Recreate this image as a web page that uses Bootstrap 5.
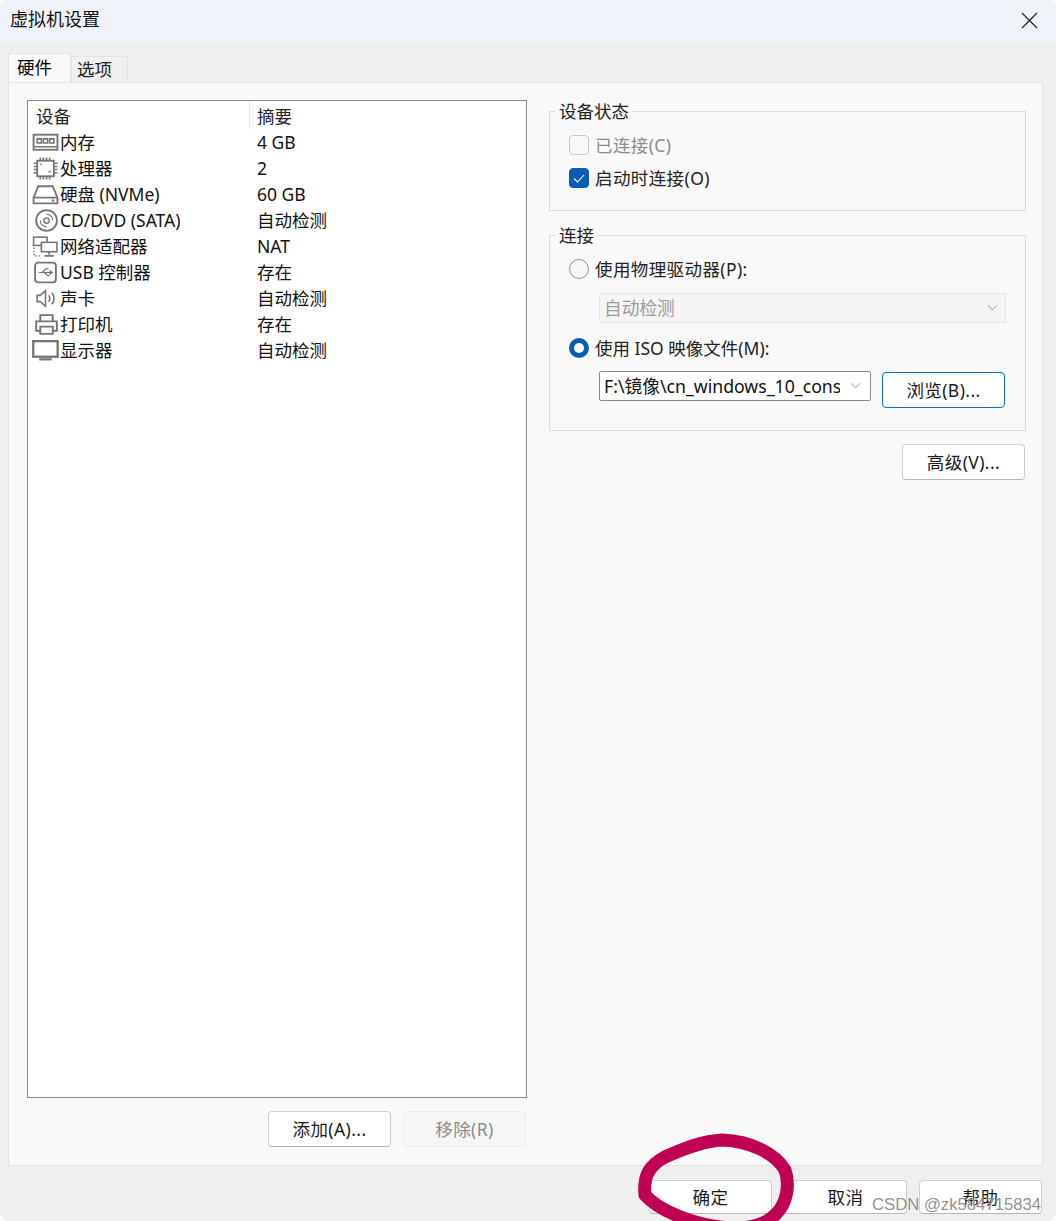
<!DOCTYPE html>
<html lang="zh-CN">
<head>
<meta charset="utf-8">
<title>虚拟机设置</title>
<link rel="stylesheet" href="https://cdn.jsdelivr.net/npm/bootstrap@5.3.0/dist/css/bootstrap.min.css">
<style>
html,body{height:100%;margin:0;background:#fff;overflow:hidden}
body{font-family:"Noto Sans","Noto Sans CJK SC",sans-serif;font-size:17.5px;line-height:26px;color:#111}
.vm-window{height:1221px;background:#efefef;border-radius:8px;position:relative;overflow:hidden}
.vm-title{height:42px;background:#f0f3f9;padding:6px 10px 0 10px;font-size:18px}
.vm-close{width:17px;height:17px;margin:6px 8px 0 0;display:block}
.vm-tabs{height:40px;padding:12px 0 0 8px;border:0;align-items:flex-end;flex-wrap:nowrap}
.vm-tabs .nav-link{border-radius:0;color:#222;line-height:24px;font-size:17.5px;margin:0;background:#f0f0f0;border:1px solid #e3e3e3;border-bottom:0;height:26px;padding:0 5px;width:57px}
.vm-tabs .nav-link.active{background:#f9f9f9;height:29px;width:63px;padding:1px 8px 0;border-color:#e3e3e3}
.vm-panel{height:1084px;margin:0 13px 0 8px;background:#f9f9f9;border:1px solid #e3e3e3;padding:17px 17px 0 18px}
.vm-left{width:500px;flex:none}
.vm-list{height:998px;background:#fff;border:1px solid #8a8a92;overflow:hidden}
.vm-head{height:28px;padding-left:8px;color:#222;line-height:30px}
.vm-head div:first-child{width:214px;border-right:1px solid #e6e6e6;height:28px}
.vm-head div:last-child{padding-left:7px}
.vm-row{height:26px;align-items:center;line-height:26px;white-space:nowrap}
.vm-ic{width:27px;height:23px;margin-left:4px;flex:none;fill:none;stroke:#747474;stroke-width:1.8}
.vm-name{width:198px;padding-left:1px}
.vm-actions{margin-top:13px;padding-right:1px;column-gap:12px}
.vm-btn{width:123px;height:36px;padding:0;border-radius:4px;background:#fff;border:1px solid #cfcfcf;border-bottom-color:#b5b5b5;color:#1a1a1a;font-size:17.5px;letter-spacing:.4px;line-height:33px;box-shadow:none}
.vm-btn:disabled{background:#f6f6f6;border-color:#ececec;color:#8a8a8a;opacity:1}
.vm-right{width:477px;margin-left:22px;flex:none}
.vm-group{border:1px solid #dcdcdc;margin:0;padding:0 19px;position:relative}
.vm-group legend{float:none;width:auto;font-size:17.5px;line-height:20px;margin:-11px 0 0 -13px;padding:0 3px;color:#222}
.vm-g1{height:110px;margin-top:1px}
.vm-g2{height:206px;margin-top:14px}
.vm-check{display:flex;align-items:center;gap:6px;height:22px;margin:0;padding:0;min-height:0}
.vm-check label{letter-spacing:.4px;opacity:1!important;color:#222}
.vm-check label.vm-tight{letter-spacing:0}
.vm-check .form-check-input{width:20px;height:20px;margin:0;float:none;border:1px solid #8d8d8d;background-color:#f6f6f6;opacity:1;flex:none}
.vm-check .form-check-input[type=checkbox]{border-radius:4px}
.vm-check .form-check-input[type=checkbox]:checked{background-color:#0b5cb5;border-color:#0b5cb5;background-size:20px;background-image:url("data:image/svg+xml,%3csvg xmlns='http://www.w3.org/2000/svg' viewBox='0 0 20 20'%3e%3cpath fill='none' stroke='%23fff' stroke-width='1.1' d='M5 10.500l3.500 3.500 6.500-7'/%3e%3c/svg%3e")}
.vm-check .form-check-input[type=radio]:checked{border:0;background-color:#0b5cb5;background-size:20px}
.vm-check .form-check-input:disabled{border-color:#c8c8c8;background-color:#f9f9f9}
.vm-check .form-check-input:disabled~label{color:#8b8b8b}
.vm-c1{margin-top:13px}
.vm-c2{margin-top:11px}
.vm-c3{margin-top:13px}
.vm-c4{margin-top:14px}
.vm-sel{font-size:17.7px;line-height:24px;padding:2px 30px 2px 4px;border-radius:2px;margin-left:30px;color:#111;background-image:url("data:image/svg+xml,%3csvg xmlns='http://www.w3.org/2000/svg' viewBox='0 0 12 8'%3e%3cpath fill='none' stroke='%23888' d='M1 1l5 5 5-5'/%3e%3c/svg%3e");background-size:11px 8px;background-position:right 9px center;box-shadow:none}
.vm-sel:disabled{background-color:#f5f5f5;border:1px solid #e6e6e6;color:#9a9a9a;width:407px;height:30px;margin-top:13px;background-position:right 7px center}
.vm-isorow{margin-top:12px}
.vm-iso{border:1px solid #8a8a8a;background-color:#fff;width:272px;height:30px;flex:none}
.vm-blue{border:1px solid #0a6ec2;margin:1px 0 0 11px}
.vm-adv{margin-top:13px;padding-right:1px}
.vm-foot{height:55px;padding:14px 14px 0 0;column-gap:12px;align-items:flex-start}
.vm-foot .vm-btn{height:34px;line-height:31px}
.vm-ink{position:absolute;left:0;top:0;width:1056px;height:1221px;pointer-events:none}
.vm-mark{position:absolute;left:872px;top:1195px;font-family:"Liberation Sans",Arial,sans-serif;font-size:16.7px;line-height:20px;color:rgba(70,70,70,.62);text-shadow:0 0 1px #fff;white-space:nowrap}
</style>
</head>
<body>
<div class="vm-window d-flex flex-column">
  <div class="vm-title d-flex justify-content-between align-items-start">
    <span>虚拟机设置</span>
    <svg class="vm-close" viewBox="0 0 17 17"><path d="M1 1l15 15M16 1L1 16" stroke="#222" stroke-width="1.2" fill="none"/></svg>
  </div>
  <ul class="nav nav-tabs vm-tabs">
    <li class="nav-item"><a class="nav-link active" href="#">硬件</a></li>
    <li class="nav-item"><a class="nav-link" href="#">选项</a></li>
  </ul>
  <div class="vm-panel d-flex">
    <div class="vm-left">
      <div class="vm-list">
        <div class="vm-head d-flex"><div>设备</div><div>摘要</div></div>
        <div class="vm-row d-flex"><svg class="vm-ic" viewBox="0 0 26 22"><rect x="1.500" y="3.500" width="23" height="14.500"/><path d="M5 7.500h4v4H5zM11 7.500h4v4h-4zM17 7.500h4v4h-4zM2 15h22" stroke-width="1.500"/></svg><div class="vm-name">内存</div><div>4 GB</div></div>
        <div class="vm-row d-flex"><svg class="vm-ic" viewBox="0 0 26 22"><rect x="5" y="3.500" width="16" height="15"/><path d="M1.500 6h3M1.500 9h3M1.500 12h3M1.500 15h3M21.500 6h3M21.500 9h3M21.500 12h3M21.500 15h3M8 .5v2.500M11 .5v2.500M14 .5v2.500M17 .5v2.500M8 19v2.500M11 19v2.500M14 19v2.500M17 19v2.500M8 7h1.500M16 14h2" stroke-width="1.500"/></svg><div class="vm-name">处理器</div><div>2</div></div>
        <div class="vm-row d-flex"><svg class="vm-ic" viewBox="0 0 26 22"><path d="M6 3h14l4.500 11v5.500h-23V14zM1.500 14h23M19 16.800h2.500"/></svg><div class="vm-name">硬盘 (NVMe)</div><div>60 GB</div></div>
        <div class="vm-row d-flex"><svg class="vm-ic" viewBox="0 0 26 22"><circle cx="14" cy="11" r="10"/><circle cx="14" cy="11" r="2.600" stroke-width="1.300"/><path d="M14 5a6 6 0 0 1 6 6M8 11a6 6 0 0 0 6 6" stroke-width="1.100"/></svg><div class="vm-name">CD/DVD (SATA)</div><div>自动检测</div></div>
        <div class="vm-row d-flex"><svg class="vm-ic" viewBox="0 0 26 22"><rect x="1.500" y="2" width="13" height="8" stroke-width="1.500"/><rect x="9" y="7" width="15" height="9" fill="#fff" stroke-width="1.500"/><path d="M16.500 16v3M12 20h9" stroke-width="1.500"/><path d="M2 12v8h7" stroke-width="1.300" stroke-dasharray="1.500 1.500"/></svg><div class="vm-name">网络适配器</div><div>NAT</div></div>
        <div class="vm-row d-flex"><svg class="vm-ic" viewBox="0 0 26 22"><rect x="3" y="1.500" width="20" height="19" rx="3"/><path d="M6.500 11h13M10 11l3-3.500h3M12 11l3 3h2M19.500 11l-2-1.500v3z" stroke-width="1.200"/></svg><div class="vm-name">USB 控制器</div><div>存在</div></div>
        <div class="vm-row d-flex"><svg class="vm-ic" viewBox="0 0 26 22"><path d="M5 8h3l5-4.500v15L8 14H5zM16 8c1.500 2 1.500 4 0 6M19 5.500c3 3.500 3 7.500 0 11" stroke-width="1.500"/></svg><div class="vm-name">声卡</div><div>自动检测</div></div>
        <div class="vm-row d-flex"><svg class="vm-ic" viewBox="0 0 26 22"><path d="M8 8V2h12v6M8 17H4v-9h20v9h-4M8 13h12v7H8z"/></svg><div class="vm-name">打印机</div><div>存在</div></div>
        <div class="vm-row d-flex"><svg class="vm-ic" viewBox="0 0 26 22"><rect x="1.200" y="2" width="23.500" height="15" stroke-width="2.200"/><path d="M7 19.500h12" stroke-width="2.200"/></svg><div class="vm-name">显示器</div><div>自动检测</div></div>
      </div>
      <div class="d-flex justify-content-end vm-actions">
        <button class="btn vm-btn">添加(A)...</button>
        <button class="btn vm-btn" disabled>移除(R)</button>
      </div>
    </div>
    <div class="vm-right">
      <fieldset class="vm-group vm-g1">
        <legend>设备状态</legend>
        <div class="form-check vm-check vm-c1"><input class="form-check-input" type="checkbox" id="c1" disabled><label class="form-check-label" for="c1">已连接(C)</label></div>
        <div class="form-check vm-check vm-c2"><input class="form-check-input" type="checkbox" id="c2" checked><label class="form-check-label" for="c2">启动时连接(O)</label></div>
      </fieldset>
      <fieldset class="vm-group vm-g2">
        <legend>连接</legend>
        <div class="form-check vm-check vm-c3"><input class="form-check-input" type="radio" name="r" id="r1"><label class="form-check-label" for="r1">使用物理驱动器(P):</label></div>
        <select class="form-select vm-sel" disabled><option>自动检测</option></select>
        <div class="form-check vm-check vm-c4"><input class="form-check-input" type="radio" name="r" id="r2" checked><label class="form-check-label vm-tight" for="r2">使用 ISO 映像文件(M):</label></div>
        <div class="d-flex align-items-start vm-isorow">
          <select class="form-select vm-sel vm-iso"><option>F:\镜像\cn_windows_10_cons</option></select>
          <button class="btn vm-btn vm-blue">浏览(B)...</button>
        </div>
      </fieldset>
      <div class="d-flex justify-content-end vm-adv"><button class="btn vm-btn">高级(V)...</button></div>
    </div>
  </div>
  <div class="vm-foot d-flex justify-content-end">
    <button class="btn vm-btn">确定</button>
    <button class="btn vm-btn">取消</button>
    <button class="btn vm-btn">帮助</button>
  </div>
  <svg class="vm-ink" viewBox="0 0 1056 1221"><path d="M645 1195C643 1175 650 1165 665 1157C685 1148 703 1141 722 1140C750 1141 775 1153 785 1170C790 1185 787 1203 776 1214C765 1226 745 1230 720 1227C695 1224 660 1212 645 1195Z" fill="none" stroke="#c00052" stroke-width="13" stroke-linejoin="round"/></svg>
  <div class="vm-mark">CSDN @zk584715834</div>
</div>
</body>
</html>
